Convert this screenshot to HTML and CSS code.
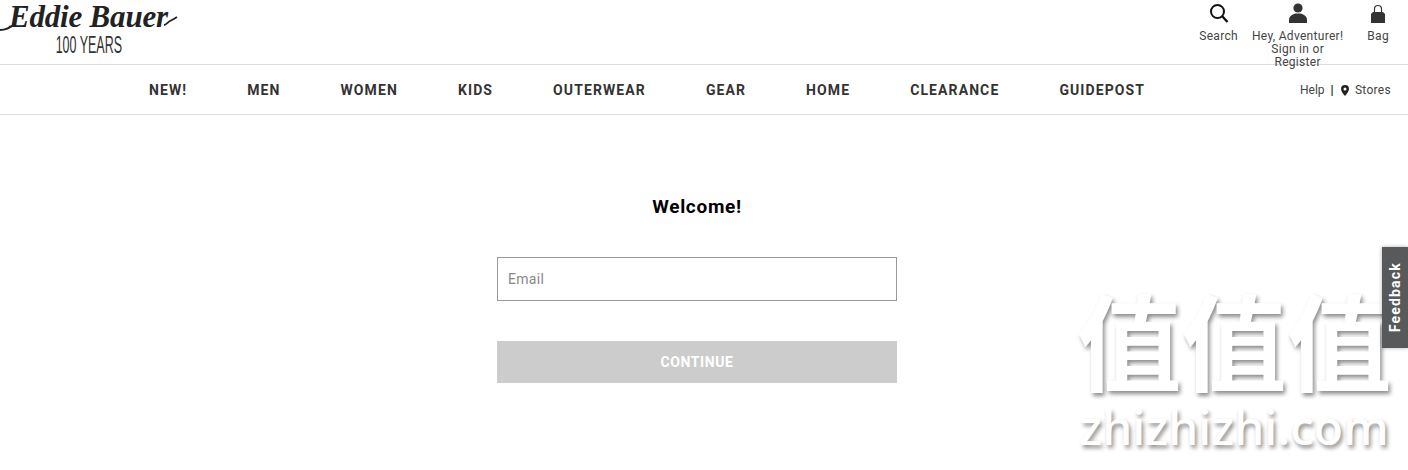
FILE: index.html
```html
<!DOCTYPE html>
<html lang="en">
  <head>
    <meta charset="UTF-8" />
    <link rel="stylesheet" href="styles.css">
    <title>Eddie Bauer</title>
  </head>
  <body>
    <header class="top">
      <a class="logo">
        <svg class="logo-mark" width="178" height="34" viewBox="0 0 178 34">
          <text class="logo-script" x="9" y="27">Eddie Bauer</text>
          <path d="M0 30C5 30 10 28 15 24M164 25c2 0 4-3 6-4 2-1 4-2 7-4" fill="none" stroke="#222" stroke-width="1.800"/>
        </svg>
        <span class="logo-years">100 YEARS</span>
      </a>
      <div class="utils">
        <a class="util util-search">
          <svg width="20" height="20" viewBox="0 0 20 20"><circle cx="8.500" cy="8.500" r="6.500" fill="none" stroke="#111" stroke-width="2"/><path d="M13 13l5.500 6" stroke="#111" stroke-width="2.400"/></svg>
          <span>Search</span>
        </a>
        <a class="util util-account">
          <svg width="20" height="20" viewBox="0 0 20 20"><circle cx="10" cy="5" r="4.600" fill="#333"/><path d="M1 20v-3C1 13 5 11 7.500 10.500h5C15 11 19 13 19 17v3z" fill="#333"/></svg>
          <span>Hey, Adventurer!<br>Sign in or<br>Register</span>
        </a>
        <a class="util util-bag">
          <svg width="16" height="20" viewBox="0 0 16 20"><path d="M4.500 9V6a3.500 3.500 0 0 1 7 0v3" fill="none" stroke="#333" stroke-width="1.200"/><path d="M3 9h10l2 2v11H1V11z" fill="#333"/></svg>
          <span>Bag</span>
        </a>
      </div>
    </header>

    <nav class="mainnav">
      <ul class="cats">
        <li>NEW!</li>
        <li>MEN</li>
        <li>WOMEN</li>
        <li>KIDS</li>
        <li>OUTERWEAR</li>
        <li>GEAR</li>
        <li>HOME</li>
        <li>CLEARANCE</li>
        <li>GUIDEPOST</li>
      </ul>
      <div class="help">
        <span class="help-link">Help</span>
        <span class="sep">|</span>
        <svg width="8" height="11" viewBox="0 0 8 11"><path fill-rule="evenodd" d="M4 0a4 4 0 0 1 4 4c0 2.500-2.500 5-4 7-1.500-2-4-4.500-4-7a4 4 0 0 1 4-4zm0 2.500a1.500 1.500 0 1 0 0 3 1.500 1.500 0 0 0 0-3z" fill="#222"/></svg>
        <span class="stores">Stores</span>
      </div>
    </nav>

    <main class="login">
      <h1>Welcome!</h1>
      <input class="email" type="text" placeholder="Email" />
      <button class="continue">CONTINUE</button>
    </main>

    <div class="watermark">
      <div class="wm-cn">值值值</div>
      <div class="wm-en">zhizhizhi.com</div>
    </div>

    <a class="feedback"><span>Feedback</span></a>
  </body>
</html>
```

FILE: styles.css
```css
* {
  box-sizing: border-box;
}
html,
body {
  height: 470px;
  overflow: hidden;
}
body {
  margin: 0;
  background-color: #fff;
  color: #333;
  font-family: Roboto, "Noto Sans", sans-serif;
}
.top {
  height: 65px;
  display: flex;
  justify-content: space-between;
  border-bottom: 1px solid #ddd;
}
.logo {
  width: 178px;
  display: flex;
  flex-direction: column;
  align-items: center;
}
.logo-mark {
  display: block;
}
.logo-script {
  font-family: "Liberation Serif", serif;
  font-style: italic;
  font-weight: 700;
  font-size: 31px;
  letter-spacing: -0.200px;
  fill: #222;
}
.logo-years {
  font-family: "Liberation Sans", sans-serif;
  font-size: 24px;
  line-height: 22px;
  color: #333;
  transform: scaleX(0.52);
  white-space: nowrap;
}
.utils {
  display: flex;
  align-items: flex-start;
  padding-right: 19px;
}
.util {
  display: flex;
  flex-direction: column;
  align-items: center;
  padding-top: 3px;
  font-size: 12px;
  line-height: 13px;
  letter-spacing: 0.300px;
  text-align: center;
  color: #444;
}
.util svg {
  margin-bottom: 7px;
}
.util-search {
  margin-right: 14px;
}
.util-account {
  margin-right: 24px;
}
.mainnav {
  height: 50px;
  display: flex;
  align-items: center;
  justify-content: space-between;
  padding: 1px 17px 0 149px;
  border-bottom: 1px solid #ddd;
}
.cats {
  display: flex;
  gap: 60px;
  margin: 0;
  padding: 0;
  list-style: none;
  font-size: 14px;
  font-weight: 700;
  letter-spacing: 1.100px;
}
.help {
  display: flex;
  align-items: center;
  font-size: 12px;
  letter-spacing: 0.300px;
  color: #444;
}
.help-link {
  letter-spacing: 0;
}
.sep {
  margin: 0 7px 0 6px;
  color: #111;
  font-weight: 700;
}
.stores {
  margin-left: 6px;
}
.login {
  width: 400px;
  margin: 0 auto;
  padding-top: 79px;
  display: flex;
  flex-direction: column;
  transform: translateX(-7px);
}
.login h1 {
  margin: 0 0 38px;
  height: 25px;
  font-size: 19px;
  line-height: 25px;
  font-weight: 700;
  letter-spacing: 0.700px;
  text-align: center;
  color: #000;
}
.email {
  height: 44px;
  padding: 0 10px;
  border: 1px solid #999;
  font: inherit;
  font-size: 14px;
  letter-spacing: 0.300px;
  outline: none;
}
.email::placeholder {
  color: #888;
}
.continue {
  height: 42px;
  margin-top: 40px;
  border: 0;
  background-color: #ccc;
  color: #fff;
  font: inherit;
  font-size: 14px;
  font-weight: 700;
  letter-spacing: 0.600px;
}
.feedback {
  position: absolute;
  top: 247px;
  right: 0;
  width: 26px;
  height: 101px;
  display: flex;
  align-items: center;
  justify-content: center;
  background-color: #58595b;
  box-shadow: 0 0 4px rgba(0, 0, 0, 0.3);
  color: #fff;
  font-size: 14px;
  font-weight: 700;
  letter-spacing: 1.200px;
}
.feedback span {
  writing-mode: vertical-rl;
  transform: rotate(180deg);
}
.watermark {
  position: absolute;
  top: 272px;
  left: 1076px;
  width: 316px;
  color: #fff;
  text-align: center;
  text-shadow: 2px 3px 4px rgba(0, 0, 0, 0.45);
  pointer-events: none;
}
.wm-cn {
  font-family: "Noto Sans CJK SC", sans-serif;
  font-size: 105px;
  line-height: 130px;
  font-weight: 700;
  white-space: nowrap;
}
.wm-en {
  font-family: "Noto Sans", sans-serif;
  font-size: 48px;
  line-height: 50px;
  font-weight: 500;
  white-space: nowrap;
}
```
